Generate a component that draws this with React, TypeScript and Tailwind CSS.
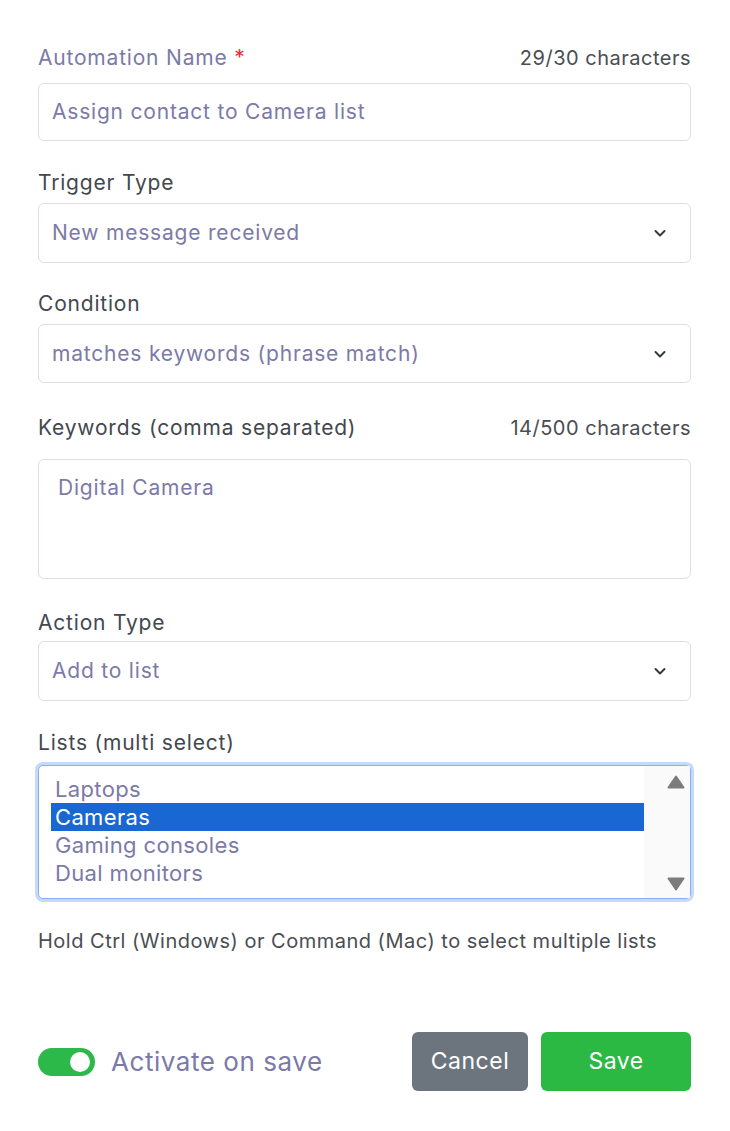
import React from "react";

function Chevron() {
  return (
    <svg width="16" height="16" viewBox="0 0 16 16" fill="none" className="text-[#343a40]">
      <path d="M3.5 6l4.5 4.5L12.5 6" stroke="currentColor" strokeWidth="2" strokeLinecap="round" strokeLinejoin="round" />
    </svg>
  );
}

function SelectBox({ value, h }: { value: string; h: string }) {
  return (
    <div className={`flex items-center justify-between rounded-md border border-[#dedde8] bg-white pl-[13px] pr-[22px] ${h}`}>
      <span className="text-[21px] tracking-[0.8px] text-[#7b7aa8]">{value}</span>
      <Chevron />
    </div>
  );
}

export default function App() {
  const lists = ["Laptops", "Cameras", "Gaming consoles", "Dual monitors"];
  return (
    <div className="min-h-[1131px] w-full bg-white pl-[38px] pr-[39px] pt-[46px] font-['Inter','Liberation_Sans',sans-serif]">
      {/* Automation name */}
      <div className="flex h-6 items-center justify-between leading-6">
        <span className="text-[21px] tracking-[0.8px] text-[#7b7aa8]">
          Automation Name <span className="text-[#e0313d]">*</span>
        </span>
        <span className="text-[20px] tracking-[0.5px] text-[#4a4d52]">29/30 characters</span>
      </div>
      <div className="mt-[13px] flex h-[58px] items-center rounded-md border border-[#dedde8] pl-[13px]">
        <span className="text-[21px] tracking-[0.8px] text-[#7b7aa8]">Assign contact to Camera list</span>
      </div>

      {/* Trigger type */}
      <div className="mt-[30px] h-6 text-[21px] leading-6 tracking-[0.8px] text-[#43484e]">Trigger Type</div>
      <div className="mt-2">
        <SelectBox value="New message received" h="h-[60px]" />
      </div>

      {/* Condition */}
      <div className="mt-[29px] h-6 text-[21px] leading-6 tracking-[0.8px] text-[#43484e]">Condition</div>
      <div className="mt-2">
        <SelectBox value="matches keywords (phrase match)" h="h-[59px]" />
      </div>

      {/* Keywords */}
      <div className="mt-[33px] flex h-6 items-center justify-between leading-6">
        <span className="text-[21px] tracking-[0.8px] text-[#43484e]">Keywords (comma separated)</span>
        <span className="text-[20px] tracking-[0.5px] text-[#4a4d52]">14/500 characters</span>
      </div>
      <div className="mt-[19px] h-[120px] rounded-md border border-[#dedde8] pl-[19px] pt-[12px]">
        <span className="text-[21px] tracking-[0.8px] text-[#7b7aa8]">Digital Camera</span>
      </div>

      {/* Action type */}
      <div className="mt-[32px] h-6 text-[21px] leading-6 tracking-[0.8px] text-[#43484e]">Action Type</div>
      <div className="mt-[6px]">
        <SelectBox value="Add to list" h="h-[60px]" />
      </div>

      {/* Lists */}
      <div className="mt-[30px] h-6 text-[21px] leading-6 tracking-[0.8px] text-[#43484e]">Lists (multi select)</div>
      <div className="mt-[10px] flex h-[134px] rounded-[5px] border border-[#86b1f0] bg-white shadow-[0_0_0_3px_#c5dafb]">
        <div className="flex-1 pl-3 pt-[9px]">
          {lists.map((l) => (
            <div
              key={l}
              className={`h-[28px] pl-1 text-[22px] leading-[28px] tracking-[0.35px] ${
                l === "Cameras" ? "bg-[#1967d2] text-white" : "text-[#7b7aa8]"
              }`}
            >
              {l}
            </div>
          ))}
        </div>
        <div className="flex w-[46px] flex-col items-center justify-between bg-[#fafafa] pb-[7px] pl-[18px] pt-[9px]">
          <svg width="18" height="14" viewBox="0 0 18 14">
            <path d="M9 1.5L16.5 12.5H1.5Z" fill="#7c7c7c" stroke="#7c7c7c" strokeWidth="2" strokeLinejoin="round" />
          </svg>
          <svg width="18" height="14" viewBox="0 0 18 14">
            <path d="M1.5 1.5H16.5L9 12.5Z" fill="#7c7c7c" stroke="#7c7c7c" strokeWidth="2" strokeLinejoin="round" />
          </svg>
        </div>
      </div>
      <div className="mt-[30px] text-[20px] leading-6 tracking-[0.5px] text-[#4a4d52]">
        Hold Ctrl (Windows) or Command (Mac) to select multiple lists
      </div>

      {/* Footer */}
      <div className="mt-[79px] flex items-center justify-between">
        <div className="flex items-center gap-4">
          <div className="flex h-[28px] w-[57px] items-center justify-end rounded-full bg-[#2db84a] pr-[5px]">
            <div className="h-[20px] w-[20px] rounded-full bg-white" />
          </div>
          <span className="text-[26px] tracking-[0.55px] text-[#7b7aa8]">Activate on save</span>
        </div>
        <div className="flex gap-[13px]">
          <button className="h-[59px] w-[116px] rounded-md bg-[#6c757d] text-[23px] tracking-[0.5px] text-white">Cancel</button>
          <button className="h-[59px] w-[150px] rounded-md bg-[#2bb843] text-[23px] tracking-[0.5px] text-white">Save</button>
        </div>
      </div>
    </div>
  );
}
